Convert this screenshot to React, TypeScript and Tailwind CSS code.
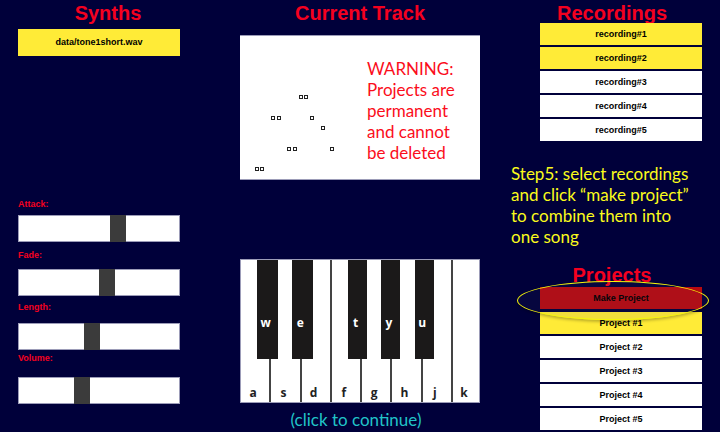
import type { ReactNode } from "react";

const recordings = [
  { name: "recording#1", selected: true },
  { name: "recording#2", selected: true },
  { name: "recording#3", selected: false },
  { name: "recording#4", selected: false },
  { name: "recording#5", selected: false },
];

const projects = [
  { name: "Project #1", selected: true },
  { name: "Project #2", selected: false },
  { name: "Project #3", selected: false },
  { name: "Project #4", selected: false },
  { name: "Project #5", selected: false },
];

const sliders = [
  { id: "attack", label: "Attack:", value: 91, spacing: "gap-[5px]" },
  { id: "fade", label: "Fade:", value: 80, spacing: "gap-2" },
  { id: "length", label: "Length:", value: 65, spacing: "gap-2.5" },
  { id: "volume", label: "Volume:", value: 55, spacing: "gap-[13px]" },
];

const whiteKeys = ["a", "s", "d", "f", "g", "h", "j", "k"];

const blackKeys = [
  { name: "w", place: "left-[6.7%] w-[9%]" },
  { name: "e", place: "left-[21.3%] w-[9%]" },
  { name: "t", place: "left-[45%] w-[8%]" },
  { name: "y", place: "left-[59%] w-[8%]" },
  { name: "u", place: "left-[73%] w-[8%]" },
];

// Left and top of each note on the track
const notes = [
  [59, 59], [64, 59], [31, 80], [37, 80], [70, 80], [81, 90],
  [47, 111], [53, 111], [90, 111], [15, 131], [20, 131],
];

function Heading({ children }: { children: ReactNode }) {
  return (
    <h2 className="h-[23px] text-center text-[20px] leading-[27px] font-bold text-[#f4001f]">
      {children}
    </h2>
  );
}

function ListButton({ name, selected }: { name: string; selected: boolean }) {
  return (
    <button
      type="button"
      className={`block h-[22px] w-full text-[9px] leading-none font-bold text-black ${selected ? "bg-[#ffeb37]" : "bg-white"}`}
    >
      {name}
    </button>
  );
}

type SliderProps = { id: string; label: string; value: number; spacing: string };

function Slider({ id, label, value, spacing }: SliderProps) {
  return (
    <div className={`flex h-[54px] flex-col justify-end ${spacing}`}>
      <label htmlFor={id} className="text-[9px] leading-3 font-bold text-[#f4001f]">
        {label}
      </label>
      <input
        id={id}
        type="range"
        min={0}
        max={144}
        defaultValue={value}
        className="m-0 block h-[27px] w-full appearance-none border border-[#9c9cb8] bg-white [&::-webkit-slider-thumb]:h-[27px] [&::-webkit-slider-thumb]:w-4 [&::-webkit-slider-thumb]:appearance-none [&::-webkit-slider-thumb]:bg-[#3b3b3b]"
      />
    </div>
  );
}

export default function App() {
  return (
    <main className="grid min-h-screen grid-cols-[162fr_240fr_162fr] gap-x-[60px] border-b border-white bg-[#00003a] px-[18px] font-['Liberation_Sans',Arial,sans-serif]">
      <section className="flex flex-col">
        <div className="pl-[18px]">
          <Heading>Synths</Heading>
        </div>
        <button
          type="button"
          className="mt-1.5 h-[27px] w-full bg-[#ffeb37] text-[9px] leading-none font-bold text-black"
        >
          data/tone1short.wav
        </button>
        <div className="mt-[132px]">
          {sliders.map((slider) => (
            <Slider key={slider.id} {...slider} />
          ))}
        </div>
      </section>

      <section className="flex flex-col">
        <Heading>Current Track</Heading>
        <div className="mt-3 flex h-[145px] border-y border-[#9c9cb8] bg-white">
          <svg className="h-[143px] w-[127px] shrink-0" viewBox="0 0 127 143" aria-hidden="true">
            {notes.map(([x, y]) => (
              <rect
                key={`${x}-${y}`}
                x={x + 0.5}
                y={y + 0.5}
                width="3"
                height="3"
                fill="white"
                stroke="#222"
              />
            ))}
          </svg>
          <p className="pt-[22px] font-[Lato,sans-serif] text-[17px] leading-[21px] text-[#fb0d1b]">
            WARNING:
            <br />
            Projects are
            <br />
            permanent
            <br />
            and cannot
            <br />
            be deleted
          </p>
        </div>

        <div className="relative mt-[79px] h-36 border border-[#9c9cb8] bg-white font-['Open_Sans',sans-serif] text-[12px] leading-none font-bold">
          <div className="flex h-full">
            {whiteKeys.map((key) => (
              <button
                key={key}
                type="button"
                className="flex flex-1 items-end justify-center border-r-2 border-[#444] pr-1 pb-[3px] text-[#222] last:w-[11%] last:flex-none last:border-r-0"
              >
                {key}
              </button>
            ))}
          </div>
          {blackKeys.map((key) => (
            <button
              key={key.name}
              type="button"
              className={`absolute top-0 flex h-[99px] items-end justify-center bg-[#1b1919] pr-1 pb-[30px] text-white ${key.place}`}
            >
              {key.name}
            </button>
          ))}
        </div>
        <button
          type="button"
          className="mt-1.5 pr-2 text-center font-[Lato,sans-serif] text-[17px] leading-[21px] text-[#20c4c8]"
        >
          (click to continue)
        </button>
      </section>

      <section className="flex flex-col">
        <div className="pr-[18px]">
          <Heading>Recordings</Heading>
        </div>
        <div className="flex flex-col gap-0.5">
          {recordings.map((item) => (
            <ListButton key={item.name} {...item} />
          ))}
        </div>

        <p className="mt-[22px] -ml-[29px] font-[Lato,sans-serif] text-[17px] leading-[21px] whitespace-nowrap text-[#fbfb1b]">
          Step5: select recordings
          <br />
          and click “make project”
          <br />
          to combine them into
          <br />
          one song
        </p>

        <div className="mt-[15px]">
          <div className="pr-[18px]">
            <Heading>Projects</Heading>
          </div>
          <div className="relative mt-0.5">
            <button
              type="button"
              className="block h-[22px] w-full bg-[#b80a10] text-[9px] leading-none font-bold text-black"
            >
              Make Project
            </button>
            <span className="pointer-events-none absolute -top-1.5 -right-[7px] -bottom-[11px] -left-[23px] rounded-[50%] border border-[#f5f50a] bg-[#505080]/8 shadow-[0_2px_3px_rgba(0,0,0,0.25)]" />
          </div>
          <div className="mt-[3px] flex flex-col gap-0.5">
            {projects.map((item) => (
              <ListButton key={item.name} {...item} />
            ))}
          </div>
        </div>
      </section>
    </main>
  );
}
